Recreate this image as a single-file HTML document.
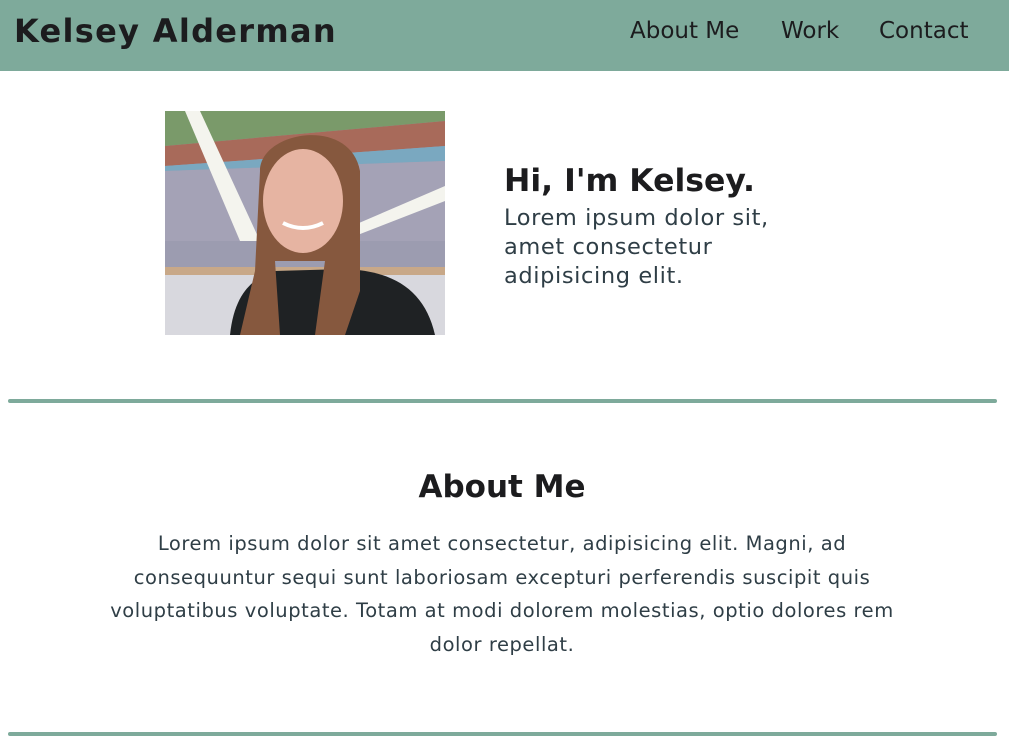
<!DOCTYPE html>
<html><head><meta charset="utf-8"><style>
*{margin:0;padding:0;box-sizing:border-box}
body{width:1009px;height:755px;overflow:hidden;background:#fff;font-family:"DejaVu Sans","Liberation Sans",sans-serif;color:#1c1c1e}
header{height:71px;background:#7eaa9b;position:relative}
.logo{position:absolute;left:14px;top:12px;font-size:32px;font-weight:bold;letter-spacing:1.3px;white-space:nowrap}
nav{position:absolute;top:18px;font-size:23px;white-space:nowrap}
nav span{position:absolute;white-space:nowrap}
.photo{position:absolute;left:165px;top:111px;width:280px;height:224px}
.hi{position:absolute;left:504px;top:163px;font-size:31.5px;font-weight:bold;white-space:nowrap}
.intro{position:absolute;left:504px;top:204px;font-size:22.5px;line-height:29px;color:#2f3e46;letter-spacing:0.6px}
.hr{position:absolute;left:8px;width:989px;height:4px;border-radius:2px;background:#7eaa9b}
h2{position:absolute;left:0;width:1004px;top:469px;text-align:center;font-size:31px;font-weight:bold}
.about{position:absolute;left:0;width:1004px;top:527px;text-align:center;font-size:19.5px;line-height:33.7px;color:#2f3e46;letter-spacing:0.55px;white-space:nowrap}
</style></head><body>
<header><div class="logo">Kelsey Alderman</div>
<nav><span style="left:630px">About Me</span><span style="left:781px">Work</span><span style="left:879px">Contact</span></nav></header>
<svg class="photo" viewBox="0 0 280 224" preserveAspectRatio="none">
<rect width="280" height="224" fill="#9c9cb0"/>
<polygon points="0,0 280,0 280,10 0,35" fill="#7a9a6a"/>
<polygon points="0,35 280,10 280,35 0,55" fill="#a86a5a"/>
<polygon points="0,55 280,35 280,50 0,60" fill="#7aa8c0"/>
<polygon points="0,60 280,50 280,130 0,130" fill="#a4a2b6"/>
<polygon points="20,0 35,0 95,130 75,130" fill="#f4f4ee"/>
<polygon points="280,75 280,90 190,125 180,118" fill="#f4f4ee"/>
<rect y="156" width="280" height="8" fill="#c8a888"/>
<rect y="164" width="280" height="60" fill="#d8d8de"/>
<path d="M65,224 C70,175 95,165 110,160 L180,158 C230,160 260,180 270,224 Z" fill="#1f2224"/>
<path d="M95,60 C95,20 185,5 195,60 L195,180 L180,224 L150,224 L160,150 L110,150 L115,224 L75,224 L90,160 Z" fill="#86583e"/>
<ellipse cx="138" cy="90" rx="40" ry="52" fill="#e6b4a2"/>
<path d="M118,112 Q138,122 158,112" stroke="#fff" stroke-width="4" fill="none"/>
</svg>
<div class="hi">Hi, I'm Kelsey.</div>
<div class="intro">Lorem ipsum dolor sit,<br>amet consectetur<br>adipisicing elit.</div>
<div class="hr" style="top:399px"></div>
<h2>About Me</h2>
<div class="about">Lorem ipsum dolor sit amet consectetur, adipisicing elit. Magni, ad<br>consequuntur sequi sunt laboriosam excepturi perferendis suscipit quis<br>voluptatibus voluptate. Totam at modi dolorem molestias, optio dolores rem<br>dolor repellat.</div>
<div class="hr" style="top:732px"></div>
</body></html>
